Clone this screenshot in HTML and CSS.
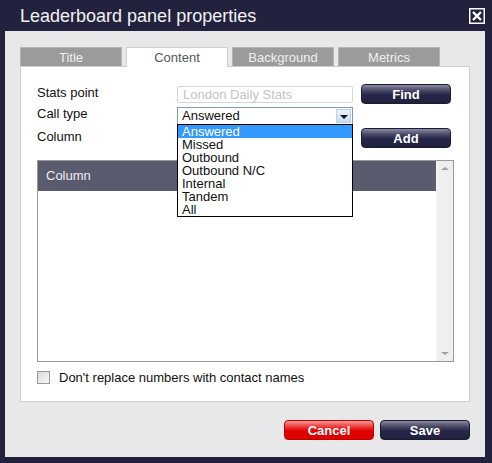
FILE: index.html
```html
<!DOCTYPE html>
<html lang="en">
<head>
  <meta charset="UTF-8">
  <title>Leaderboard panel properties</title>
  <link rel="stylesheet" href="styles.css">
</head>
<body>

  <div class="dialog">
    <div class="titlebar">
      <h1>Leaderboard panel properties</h1>
      <svg class="close" width="16" height="16" viewBox="0 0 16 16">
        <rect x="0.75" y="0.75" width="14.5" height="14.5" fill="none" stroke="#fff" stroke-width="1.5"/>
        <path d="M4 4 L12 12 M12 4 L4 12" stroke="#fff" stroke-width="2.4"/>
      </svg>
    </div>

    <div class="dialog-body">
      <div class="tabs">
        <div class="tab">Title</div>
        <div class="tab active">Content</div>
        <div class="tab">Background</div>
        <div class="tab">Metrics</div>
      </div>

      <div class="panel">
        <div class="row row-1">
          <label>Stats point</label>
          <input type="text" placeholder="London Daily Stats">
          <button class="btn">Find</button>
        </div>

        <div class="row row-2">
          <label>Call type</label>
          <div class="select">
            <span>Answered</span>
            <span class="select-arrow"></span>
            <ul class="dropdown">
              <li class="selected">Answered</li>
              <li>Missed</li>
              <li>Outbound</li>
              <li>Outbound N/C</li>
              <li>Internal</li>
              <li>Tandem</li>
              <li>All</li>
            </ul>
          </div>
        </div>

        <div class="row row-3">
          <label>Column</label>
          <div class="spacer"></div>
          <button class="btn">Add</button>
        </div>

        <div class="list">
          <div class="list-main">
            <div class="list-head">Column</div>
          </div>
          <div class="scrollbar">
            <span class="arrow up"></span>
            <span class="arrow down"></span>
          </div>
        </div>

        <div class="check-row">
          <span class="checkbox"></span>
          <span>Don't replace numbers with contact names</span>
        </div>
      </div>

      <div class="footer">
        <button class="btn btn-red">Cancel</button>
        <button class="btn">Save</button>
      </div>
    </div>
  </div>

</body>
</html>
```

FILE: styles.css
```css
body {
  margin: 0;
  background: #22223f;
  font-family: "Liberation Sans", Arial, sans-serif;
  font-size: 13px;
  color: #111;
}

.dialog {
  width: 492px;
  height: 463px;
}

.titlebar {
  height: 31px;
  display: flex;
  align-items: flex-start;
  justify-content: space-between;
  padding: 0 7px 0 20px;
}

.titlebar h1 {
  margin: 0;
  padding-top: 5px;
  font-size: 18px;
  font-weight: normal;
  line-height: 22px;
  color: #f2f2f2;
}

.close {
  margin-top: 8px;
}

.dialog-body {
  background: #e8e8ea;
  margin: 0 7px 0 5px;
  padding: 16px 15px 17px 15px;
}

.tabs {
  display: flex;
  gap: 4px;
  height: 19px;
}

.tab {
  width: 102px;
  box-sizing: border-box;
  background: #9b9b9b;
  border: 1px solid #b5b5b5;
  border-bottom: none;
  color: #f0f0f0;
  text-align: center;
  line-height: 19px;
}

.tab.active {
  background: #fff;
  border-color: #cfcfcf;
  color: #555;
  height: 20px;
  position: relative;
  z-index: 1;
}

.panel {
  background: #fff;
  border: 1px solid #cfcfcf;
  height: 317px;
  padding: 17px 0 0 16px;
}

.row {
  display: flex;
  align-items: center;
}

.row label {
  width: 140px;
  padding-bottom: 3px;
}

.row-1 { height: 20px; }
.row-2 { height: 22px; }
.row-3 { height: 24px; }

.row input {
  width: 176px;
  height: 17px;
  box-sizing: border-box;
  border: 1px solid #d6d6d6;
  border-radius: 2px;
  padding: 0 5px;
  font-family: inherit;
  font-size: 13px;
  margin-right: 8px;
}

.row input::placeholder {
  color: #c4c4c4;
}

.spacer {
  width: 176px;
  margin-right: 8px;
}

.btn {
  width: 90px;
  height: 20px;
  border: 1px solid #1b1b33;
  border-radius: 4px;
  background: linear-gradient(#8a8aa0 0%, #4a4a66 30%, #26264a 55%, #20203d 100%);
  color: #fff;
  font-family: "Liberation Sans", Arial, sans-serif;
  font-size: 13px;
  font-weight: bold;
  padding: 0;
  cursor: pointer;
}

.btn-red {
  border-color: #c00000;
  background: linear-gradient(#f59a9a 0%, #ec4040 30%, #e00000 55%, #dd0000 100%);
}

.select {
  position: relative;
  width: 176px;
  height: 18px;
  box-sizing: border-box;
  border: 1px solid #7f9db9;
  display: flex;
  align-items: center;
  justify-content: space-between;
  padding-left: 4px;
  margin-top: 1px;
}

.select-arrow {
  width: 15px;
  height: 14px;
  margin-right: 1px;
  box-sizing: border-box;
  border: 1px solid #b9d0ea;
  background: linear-gradient(#eaf2fc, #c9dbf2);
  position: relative;
}

.select-arrow::after {
  content: "";
  position: absolute;
  left: 3px;
  top: 5px;
  border-left: 4px solid transparent;
  border-right: 4px solid transparent;
  border-top: 4px solid #111;
}

.dropdown {
  position: absolute;
  top: 16px;
  left: -1px;
  width: 176px;
  box-sizing: border-box;
  margin: 0;
  padding: 0;
  list-style: none;
  background: #fff;
  border: 1px solid #000;
  z-index: 5;
}

.dropdown li {
  line-height: 13px;
  padding-left: 4px;
}

.dropdown li.selected {
  background: #3399ff;
  color: #fff;
}

.list {
  margin-top: 10px;
  width: 417px;
  height: 202px;
  box-sizing: border-box;
  border: 1px solid #9a9a9a;
  display: flex;
}

.list-main {
  flex: 1;
}

.list-head {
  height: 30px;
  background: #5b5b70;
  color: #eee;
  line-height: 30px;
  padding-left: 8px;
}

.scrollbar {
  width: 17px;
  background: #efefef;
  border-left: 1px solid #f8f8f8;
  display: flex;
  flex-direction: column;
  justify-content: space-between;
  align-items: center;
  padding: 6px 0;
  box-sizing: border-box;
}

.arrow {
  width: 0;
  height: 0;
  border-left: 4px solid transparent;
  border-right: 4px solid transparent;
}

.arrow.up { border-bottom: 3px solid #a0a0a0; }
.arrow.down { border-top: 3px solid #a0a0a0; }

.check-row {
  margin-top: 9px;
  display: flex;
  align-items: center;
  gap: 9px;
  height: 13px;
}

.checkbox {
  width: 13px;
  height: 13px;
  box-sizing: border-box;
  border: 1px solid #999;
  background: linear-gradient(135deg, #d8d8de, #f8f8fa);
}

.footer {
  display: flex;
  justify-content: flex-end;
  gap: 6px;
  margin-top: 18px;
}
```
